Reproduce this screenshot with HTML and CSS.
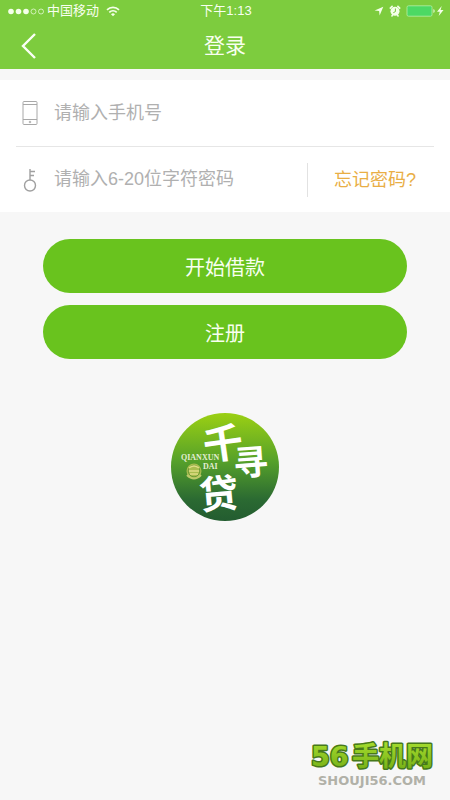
FILE: index.html
```html
<!DOCTYPE html>
<html lang="zh-CN">
<head>
    <meta charset="UTF-8">
    <meta name="viewport" content="width=device-width, initial-scale=1.0">
    <title>登录</title>
    <link rel="stylesheet" href="styles.css">
</head>
<body>
    <header class="top-bar">
        <div class="status-bar">
            <div class="status-left">
                <svg width="38" height="13" viewBox="0 0 38 13" fill="#f4ffe9" stroke="#f4ffe9">
                    <circle cx="4" cy="6.5" r="2.8" stroke="none"/>
                    <circle cx="11.5" cy="6.5" r="2.8" stroke="none"/>
                    <circle cx="19" cy="6.5" r="2.8" stroke="none"/>
                    <circle cx="26.5" cy="6.5" r="2.5" fill="none" stroke-width=".7"/>
                    <circle cx="34" cy="6.5" r="2.5" fill="none" stroke-width=".7"/>
                </svg>
                <span>中国移动</span>
                <svg class="wifi" width="14" height="11" viewBox="0 0 14 11" fill="none" stroke="#f4ffe9" stroke-width="1.7">
                    <path d="M1 3.8a8.7 8.7 0 0 1 12 0M3.3 6.3a5.4 5.4 0 0 1 7.4 0"/>
                    <path d="M7 10.2 5 8.2a2.9 2.9 0 0 1 4 0z" fill="#f4ffe9" stroke="none"/>
                </svg>
            </div>
            <span>下午1:13</span>
            <div class="status-right">
                <svg width="10" height="10" viewBox="0 0 10 10" fill="#f4ffe9">
                    <path d="M9.3.7 5.6 9.5 5.1 5 .6 4.5z"/>
                </svg>
                <svg width="12" height="12" viewBox="0 0 12 12">
                    <path d="M.8 3.6 3.6.9M11.2 3.6 8.4.9M2.5 11.5l1.2-1.4M9.5 11.5l-1.2-1.4" stroke="#f4ffe9" stroke-width="1.5"/>
                    <circle cx="6" cy="6.3" r="4.5" fill="#f4ffe9"/>
                    <path d="M6.4 3.5v3.1L4.3 7.7" fill="none" stroke="#76c63a"/>
                </svg>
                <svg width="39" height="12" viewBox="0 0 39 12">
                    <rect x="1" y=".8" width="25" height="10.4" rx="1.5" fill="#4cd964" stroke="#b9efa4" stroke-width=".8"/>
                    <path d="M27.3 4v4q1.5-.5 1.5-2t-1.5-2z" fill="#d5f5c2"/>
                    <path d="M35.7 1 31 6.8h2.8L32.7 11l4.8-5.9h-2.9z" fill="#f4ffe9"/>
                </svg>
            </div>
        </div>
        <div class="nav-bar">
            <a class="back" href="#" aria-label="返回">
                <svg width="16" height="28" viewBox="0 0 16 28" fill="none" stroke="#fafff5" stroke-width="2.4">
                    <path d="M14 2 2 14l12 12"/>
                </svg>
            </a>
            <h1>登录</h1>
        </div>
    </header>

    <main>
        <form>
            <div class="fields">
                <div class="field">
                    <label for="phone" aria-label="手机号">
                        <svg width="16" height="26" viewBox="0 0 16 26" fill="none" stroke="#a8a8a8">
                            <rect x="1" y="1.5" width="14" height="23" rx="1"/>
                            <path d="M1 4.5h14M1 19.5h14"/>
                            <circle cx="8" cy="22" r=".8"/>
                        </svg>
                    </label>
                    <input type="tel" id="phone" placeholder="请输入手机号">
                </div>
                <div class="field">
                    <label for="password" aria-label="密码">
                        <svg width="16" height="26" viewBox="0 0 16 26" fill="none" stroke="#a0a0a0" stroke-width="1.4">
                            <circle cx="8" cy="18.5" r="5.5"/>
                            <path d="M8 13V2M8 4.5h5M8 8.5h4"/>
                        </svg>
                    </label>
                    <input type="password" id="password" placeholder="请输入6-20位字符密码">
                    <a class="forgot" href="#">忘记密码?</a>
                </div>
            </div>
            <div class="actions">
                <button type="submit">开始借款</button>
                <button type="button">注册</button>
            </div>
        </form>

        <svg class="logo" width="108" height="108" viewBox="0 0 108 108">
            <defs>
                <linearGradient id="logoGreen" x1="0" y1="0" x2="0" y2="1">
                    <stop offset="0" stop-color="#9bd013"/>
                    <stop offset=".45" stop-color="#55a02a"/>
                    <stop offset=".8" stop-color="#2b6a32"/>
                    <stop offset="1" stop-color="#235c30"/>
                </linearGradient>
            </defs>
            <circle cx="54" cy="54" r="54" fill="url(#logoGreen)"/>
            <g class="logo-name">
                <text x="32" y="45" font-size="40" transform="rotate(-8 52 30)">千</text>
                <text x="62" y="62" font-size="35" transform="rotate(-4 79 48)">寻</text>
                <text x="28" y="95" font-size="39" transform="rotate(-5 48 80)">贷</text>
            </g>
            <g class="logo-latin">
                <text x="10" y="47">QIANXUN</text>
                <text x="32" y="56">DAI</text>
            </g>
            <!-- coin seal -->
            <circle cx="23" cy="58" r="7.5" fill="#a9bd4f"/>
            <circle cx="23" cy="58" r="5.8" fill="none" stroke="#6f9b37"/>
            <path d="M18 55q5-4 10 0M18 58h10M19 61h8" fill="none" stroke="#e0dc85" stroke-width="1.3"/>
            <path d="M16 62q7 7 14 0" fill="none" stroke="#bdc96a" stroke-width="2"/>
        </svg>
    </main>

    <svg class="watermark" width="130" height="60" viewBox="0 0 130 60">
        <defs>
            <linearGradient id="markGreen" x1="0" y1="0" x2="0" y2="1">
                <stop offset="0" stop-color="#a5dc2e"/>
                <stop offset="1" stop-color="#72ad14"/>
            </linearGradient>
        </defs>
        <text class="mark-name mark-digits" x="3" y="34">56</text>
        <text class="mark-name" x="44" y="34">手机网</text>
        <text class="mark-site" x="64" y="53">SHOUJI56.COM</text>
    </svg>
</body>
</html>
```
FILE: styles.css
```css
* {
    box-sizing: border-box;
}

body {
    margin: 0;
    min-height: 100vh;
    position: relative;
    background-color: #f7f7f7;
    font-family: "Liberation Sans", "Noto Sans CJK SC", sans-serif;
}

svg {
    display: block;
}

a {
    text-decoration: none;
}

.top-bar {
    background-color: #7dcc3e;
    color: #f8fff0;
}

.status-bar {
    display: grid;
    grid-template-columns: 1fr auto 1fr;
    align-items: center;
    height: 22px;
    padding: 0 5px 0 7px;
    font-size: 13px;
    line-height: 20px;
}

.status-left,
.status-right {
    display: flex;
    align-items: center;
    gap: 2px;
}

.wifi {
    margin-left: 5px;
}

.status-right {
    justify-content: flex-end;
    gap: 5px;
}

.nav-bar {
    display: grid;
    grid-template-columns: 48px 1fr 48px;
    align-items: center;
    height: 47px;
}

.back {
    padding-left: 21px;
}

.nav-bar h1 {
    margin: 0;
    font-size: 21px;
    font-weight: 400;
    line-height: 30px;
    text-align: center;
}

.fields {
    margin-top: 11px;
    padding: 0 16px;
    background-color: #fff;
}

.field {
    display: flex;
    align-items: center;
    height: 66px;
}

.field + .field {
    border-top: 1px solid #e6e6e6;
}

.field label {
    padding: 0 16px 0 6px;
}

.field input {
    flex: 1;
    min-width: 0;
    padding: 0;
    border: none;
    outline: none;
    background: none;
    color: #333;
    font-family: inherit;
    font-size: 18px;
}

.field input::placeholder {
    color: #b0b0b0;
}

.forgot {
    padding: 0 18px 0 26px;
    border-left: 1px solid #e2e2e2;
    color: #e9ae45;
    font-size: 18px;
    line-height: 34px;
}

.actions {
    display: flex;
    flex-direction: column;
    gap: 12px;
    padding: 27px 43px 54px;
}

.actions button {
    height: 54px;
    border: none;
    border-radius: 27px;
    background-color: #69c31e;
    color: #f8fff0;
    font-family: inherit;
    font-size: 20px;
    cursor: pointer;
}

.logo {
    margin: 0 auto;
}

.logo-name {
    fill: #fff;
    font-family: "Noto Sans CJK SC", sans-serif;
    font-weight: 700;
}

.logo-latin {
    fill: #e4eed2;
    font-family: "Liberation Serif", serif;
    font-size: 8px;
    font-weight: 700;
}

/* site mark, lies over the bottom right corner */
.watermark {
    position: absolute;
    right: 12px;
    bottom: 8px;
}

.mark-name {
    fill: url(#markGreen);
    stroke: #47791a;
    stroke-width: 3px;
    stroke-linejoin: round;
    paint-order: stroke;
    font-size: 27px;
    font-weight: 700;
}

.mark-digits {
    font-family: "DejaVu Sans", sans-serif;
}

.mark-site {
    fill: #b1b1a8;
    font-family: "DejaVu Sans", sans-serif;
    font-size: 13px;
    font-weight: 700;
    text-anchor: middle;
}
```
